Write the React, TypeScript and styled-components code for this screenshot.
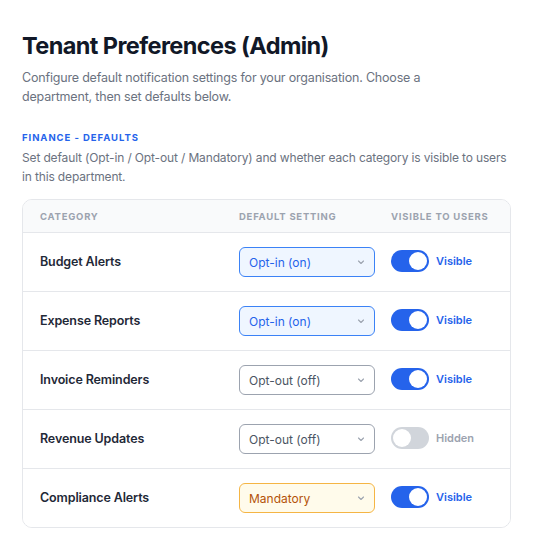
import * as React from "react";
import styled, { createGlobalStyle } from "styled-components";

type Setting = "optin" | "optout" | "mandatory";

interface ICategory {
  name: string;
  setting: Setting;
  visible: boolean;
}

const categories: ICategory[] = [
  { name: "Budget Alerts", setting: "optin", visible: true },
  { name: "Expense Reports", setting: "optin", visible: true },
  { name: "Invoice Reminders", setting: "optout", visible: true },
  { name: "Revenue Updates", setting: "optout", visible: false },
  { name: "Compliance Alerts", setting: "mandatory", visible: true },
];

const settingLabels: Record<Setting, string> = {
  optin: "Opt-in (on)",
  optout: "Opt-out (off)",
  mandatory: "Mandatory",
};

const settingColors: Record<Setting, { border: string; bg: string; text: string }> = {
  optin: { border: "#3b82f6", bg: "#eff6ff", text: "#2563eb" },
  optout: { border: "#9ca3af", bg: "#ffffff", text: "#4b5563" },
  mandatory: { border: "#f5b544", bg: "#fffbeb", text: "#b45309" },
};

const GlobalStyle = createGlobalStyle`
  body {
    margin: 0;
    background: #ffffff;
    font-family: Inter, "Noto Sans", sans-serif;
    color: #111827;
  }
`;

const Page = styled.div`
  padding: 30px 27px 20px 22px;
`;

const Title = styled.h1`
  margin: 0;
  font-size: 23.5px;
  font-weight: 700;
  letter-spacing: -0.025em;
  color: #111827;
  line-height: 32px;
`;

const Lead = styled.p`
  margin: 6px 0 0;
  font-size: 12.5px;
  letter-spacing: -0.015em;
  line-height: 19px;
  color: #6b7280;
  max-width: 420px;
`;

const SectionLabel = styled.div`
  margin-top: 26px;
  font-size: 9.5px;
  font-weight: 700;
  letter-spacing: 0.1em;
  color: #2563eb;
  text-transform: uppercase;
`;

const SectionText = styled.p`
  margin: 5px 0 0;
  font-size: 12px;
  letter-spacing: -0.012em;
  line-height: 19px;
  color: #6b7280;
`;

const Card = styled.div`
  margin-top: 13px;
  border: 1px solid #e5e7eb;
  border-radius: 10px;
  overflow: hidden;
`;

const Row = styled.div<{ $head?: boolean }>`
  display: grid;
  grid-template-columns: 199px 152px 1fr;
  align-items: center;
  padding: 0 17px;
  height: ${(p) => (p.$head ? "32px" : "58px")};
  background: ${(p) => (p.$head ? "#f9fafb" : "#ffffff")};
  border-top: ${(p) => (p.$head ? "none" : "1px solid #e5e7eb")};
`;

const HeadCell = styled.div`
  font-size: 9.5px;
  font-weight: 700;
  letter-spacing: 0.08em;
  color: #9ca3af;
  text-transform: uppercase;
`;

const Name = styled.div`
  font-size: 12.5px;
  font-weight: 600;
  letter-spacing: -0.01em;
  color: #1f2937;
  padding-bottom: 2px;
`;

const Select = styled.div<{ $setting: Setting }>`
  display: flex;
  align-items: center;
  justify-content: space-between;
  box-sizing: border-box;
  width: 136px;
  height: 30px;
  padding: 0 9px 0 9px;
  border-radius: 6px;
  border: 1px solid ${(p) => settingColors[p.$setting].border};
  background: ${(p) => settingColors[p.$setting].bg};
  color: ${(p) => settingColors[p.$setting].text};
  font-size: 12px;
`;

const Chevron = styled.svg`
  flex: none;
  color: #9ca3af;
`;

const Visibility = styled.div`
  display: flex;
  align-items: center;
  gap: 7px;
  padding-bottom: 2px;
`;

const Toggle = styled.div<{ $on: boolean }>`
  position: relative;
  width: 38px;
  height: 22px;
  border-radius: 11px;
  background: ${(p) => (p.$on ? "#2563eb" : "#d1d5db")};

  &::after {
    content: "";
    position: absolute;
    top: 2px;
    left: ${(p) => (p.$on ? "18px" : "2px")};
    width: 18px;
    height: 18px;
    border-radius: 50%;
    background: #ffffff;
  }
`;

const ToggleLabel = styled.span<{ $on: boolean }>`
  font-size: 11px;
  font-weight: 600;
  color: ${(p) => (p.$on ? "#2563eb" : "#9ca3af")};
`;

const CategoryRow = (props: ICategory) => (
  <Row>
    <Name>{props.name}</Name>
    <div>
      <Select $setting={props.setting}>
        <span>{settingLabels[props.setting]}</span>
        <Chevron width='8' height='8' viewBox='0 0 8 8'>
          <path d='M1.5 3 L4 5.5 L6.5 3' fill='none' stroke='currentColor' strokeWidth='1.1' strokeLinecap='round' strokeLinejoin='round' />
        </Chevron>
      </Select>
    </div>
    <Visibility>
      <Toggle $on={props.visible} />
      <ToggleLabel $on={props.visible}>{props.visible ? "Visible" : "Hidden"}</ToggleLabel>
    </Visibility>
  </Row>
);

const App = () => (
  <Page>
    <GlobalStyle />
    <Title>Tenant Preferences (Admin)</Title>
    <Lead>
      Configure default notification settings for your organisation. Choose a department, then set
      defaults below.
    </Lead>
    <SectionLabel>Finance - Defaults</SectionLabel>
    <SectionText>
      Set default (Opt-in / Opt-out / Mandatory) and whether each category is visible to users in
      this department.
    </SectionText>
    <Card>
      <Row $head>
        <HeadCell>Category</HeadCell>
        <HeadCell>Default setting</HeadCell>
        <HeadCell>Visible to users</HeadCell>
      </Row>
      {categories.map((c) => (
        <CategoryRow key={c.name} {...c} />
      ))}
    </Card>
  </Page>
);

export default App;
